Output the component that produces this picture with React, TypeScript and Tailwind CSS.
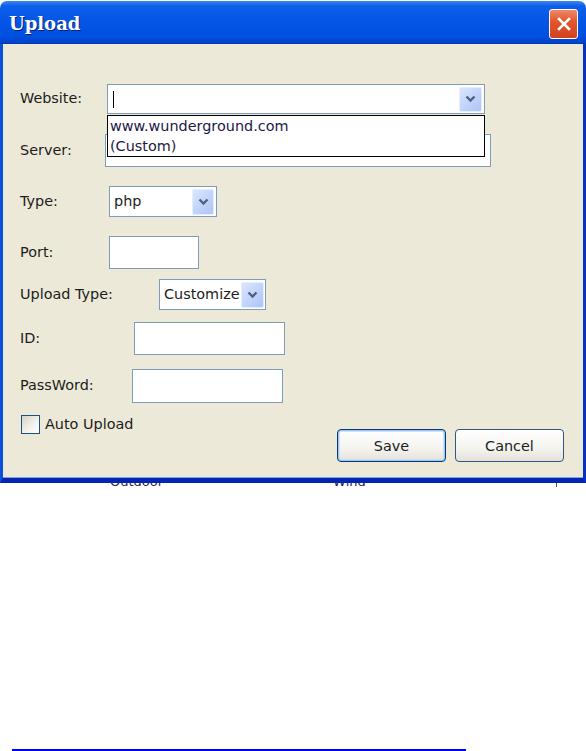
const SANS = "font-['DejaVu_Sans',sans-serif]";

function Chevron() {
  return (
    <svg width="11" height="8" viewBox="0 0 11 8" aria-hidden="true">
      <path d="M1.5 1.5 L5.5 5.5 L9.5 1.5" fill="none" stroke="#4d6185" strokeWidth="2.4" />
    </svg>
  );
}

function DropButton({ className }: { className: string }) {
  return (
    <div
      className={`flex shrink-0 items-center justify-center rounded-[2px] border border-[#e6edfd] bg-[linear-gradient(135deg,#dbe6fe_0%,#c3d5fb_50%,#aec4f6_100%)] ${className}`}
    >
      <Chevron />
    </div>
  );
}

function Row({ label, labelW, className, children }: { label: string; labelW: string; className: string; children: React.ReactNode }) {
  return (
    <div className={`flex items-center ${className}`}>
      <span className={`shrink-0 ${labelW}`}>{label}</span>
      {children}
    </div>
  );
}

export default function App() {
  return (
    <div className={`h-[751px] w-[586px] overflow-hidden bg-white text-[14.4px] text-[#1c1c1c] ${SANS}`}>
      {/* window */}
      <div className="mt-px flex h-[482px] w-[586px] flex-col">
        <div className="flex h-[43px] shrink-0 items-center justify-between rounded-t-[7px] bg-[linear-gradient(to_bottom,#3b86f2_0%,#0d5ee9_12%,#0556e6_45%,#0050e0_80%,#0044cc_96%,#0033b0_100%)] pl-[9px] pr-[8px] pt-[2px]">
          <span className="font-['DejaVu_Serif',serif] text-[18px] font-bold leading-none text-white [text-shadow:1px_1px_0_#0a1f7a]">
            Upload
          </span>
          <div className="flex h-[30px] w-[29px] items-center justify-center rounded-[3px] border border-white bg-[linear-gradient(to_bottom,#ec8a6b_0%,#e2572f_40%,#cf4220_100%)]">
            <svg width="16" height="16" viewBox="0 0 16 16" aria-hidden="true">
              <path d="M3 3 L13 13 M13 3 L3 13" stroke="white" strokeWidth="2.6" strokeLinecap="square" />
            </svg>
          </div>
        </div>

        <div className="relative flex-1 border-b-[5px] border-l-[3px] border-r-[3px] border-b-[#0624b2] border-l-[#0b4fdc] border-r-[#0632c4] bg-[#ece9d8] pl-[17px] pt-[40px] shadow-[inset_0_-1px_0_#7ba2ee]">
          <Row label="Website:" labelW="w-[87px]" className="h-[30px]">
            <div className="flex h-[30px] w-[378px] items-center justify-between border border-[#7f9db9] bg-white pl-[5px] pr-[2px]">
              <span className="h-[17px] w-px bg-black" />
              <DropButton className="h-[25px] w-[23px]" />
            </div>
          </Row>

          <Row label="Server:" labelW="w-[85px]" className="mt-[20px] h-[33px]">
            <div className="h-[33px] w-[386px] border border-[#7f9db9] bg-white" />
          </Row>

          <Row label="Type:" labelW="w-[89px]" className="mt-[19px] h-[31px]">
            <div className="flex h-[31px] w-[108px] items-center justify-between border border-[#7f9db9] bg-white pl-[4px] pr-[2px]">
              <span>php</span>
              <DropButton className="h-[26px] w-[22px]" />
            </div>
          </Row>

          <Row label="Port:" labelW="w-[89px]" className="mt-[19px] h-[33px]">
            <div className="h-[33px] w-[90px] border border-[#7f9db9] bg-white" />
          </Row>

          <Row label="Upload Type:" labelW="w-[139px]" className="mt-[10px] h-[31px]">
            <div className="flex h-[31px] w-[107px] items-center justify-between border border-[#7f9db9] bg-white pl-[4px] pr-[1px]">
              <span>Customize</span>
              <DropButton className="h-[26px] w-[23px]" />
            </div>
          </Row>

          <Row label="ID:" labelW="w-[114px]" className="mt-[12px] h-[33px]">
            <div className="h-[33px] w-[151px] border border-[#7f9db9] bg-white" />
          </Row>

          <Row label="PassWord:" labelW="w-[112px]" className="mt-[14px] h-[34px]">
            <div className="h-[34px] w-[151px] border border-[#7f9db9] bg-white" />
          </Row>

          <div className="mt-[11px] flex items-start justify-between pr-[19px]">
            <label className="ml-px flex items-center gap-[5px]">
              <span className="h-[19px] w-[19px] border border-[#1c5180] bg-[linear-gradient(135deg,#d5d3c8_0%,#f3f3ef_60%,#ffffff_100%)]" />
              <span>Auto Upload</span>
            </label>
            <div className="mt-[15px] flex gap-[9px]">
              <button
                type="button"
                className="h-[33px] w-[109px] rounded-[4px] border border-[#003c74] bg-[linear-gradient(to_bottom,#ffffff_0%,#f4f3ee_60%,#e3e1d8_100%)] pt-[2px] shadow-[inset_0_0_0_1px_#a6c1f4,inset_0_0_0_2px_#d0e0fb]"
              >
                Save
              </button>
              <button
                type="button"
                className="h-[33px] w-[109px] rounded-[4px] border border-[#2c5a88] bg-[linear-gradient(to_bottom,#ffffff_0%,#f4f3ee_60%,#e3e1d8_100%)] pt-[2px]"
              >
                Cancel
              </button>
            </div>
          </div>

          {/* open list of the Website combo */}
          <div className="absolute left-[104px] top-[71px] flex h-[42px] w-[378px] flex-col border border-black bg-white pl-[2px] leading-[20px] text-[#1d1846]">
            <span>www.wunderground.com</span>
            <span>(Custom)</span>
          </div>
        </div>
      </div>

      {/* what shows of the page behind the window */}
      <div className="flex h-[6px] items-start overflow-hidden text-[13px] leading-none text-[#2a2250]">
        <span className="-mt-[8px] ml-[110px]">Outdoor</span>
        <span className="-mt-[8px] ml-[170px]">Wind</span>
        <span className="ml-[190px] h-[4px] w-px bg-[#555]" />
      </div>

      <div className="ml-[12px] mt-[260px] h-[2px] w-[454px] bg-[#0000ff]" />
    </div>
  );
}
